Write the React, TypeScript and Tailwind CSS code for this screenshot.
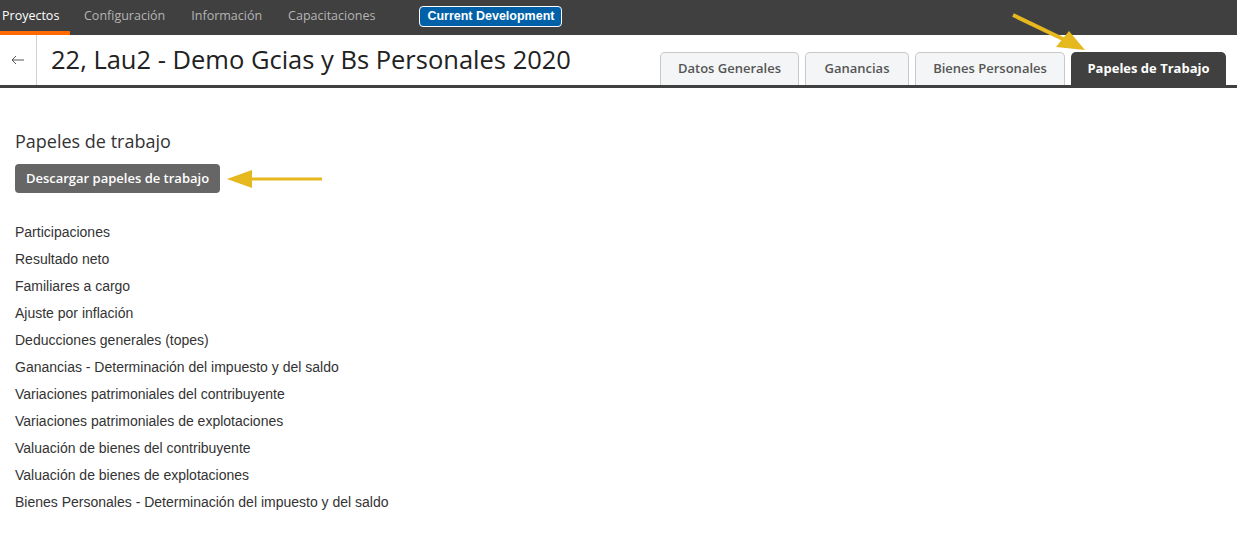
import React from 'react';

const navItems = ['Configuración', 'Información', 'Capacitaciones'];

const tabs = [
    { label: 'Datos Generales', width: 'w-[139px]' },
    { label: 'Ganancias', width: 'w-[104px]' },
    { label: 'Bienes Personales', width: 'w-[150px]' },
];

const papeles = [
    'Participaciones',
    'Resultado neto',
    'Familiares a cargo',
    'Ajuste por inflación',
    'Deducciones generales (topes)',
    'Ganancias - Determinación del impuesto y del saldo',
    'Variaciones patrimoniales del contribuyente',
    'Variaciones patrimoniales de explotaciones',
    'Valuación de bienes del contribuyente',
    'Valuación de bienes de explotaciones',
    'Bienes Personales - Determinación del impuesto y del saldo',
];

const App: React.FC = () => {
    return (
        <div className="relative w-[1237px] h-[560px] bg-white overflow-hidden font-['Open_Sans',sans-serif]">
            {/* Top nav */}
            <div className="h-[35px] bg-[#404040] flex items-stretch text-[12.5px] pb-[2px]">
                <div className="relative w-[70px] pl-[2px] flex items-center text-white">
                    Proyectos
                    <span className="absolute left-0 bottom-[-2px] w-[70px] h-[4px] bg-[#ff6a00]"></span>
                </div>
                <div className="flex items-center gap-[26px] ml-[14px] text-[#b4b4b4]">
                    {navItems.map(item => (
                        <span key={item}>{item}</span>
                    ))}
                </div>
                <div className="flex items-center ml-[44px]">
                    <span className="h-[21px] px-[7px] flex items-center rounded-[4px] border border-white bg-[#0061a8] text-white font-bold text-[12.5px] font-['Liberation_Sans',sans-serif]">
                        Current Development
                    </span>
                </div>
            </div>

            {/* Header */}
            <div className="h-[53px] flex items-stretch border-b-[3px] border-[#404040]">
                <div className="w-[37px] border-r border-[#d0d0d0] flex items-center justify-center">
                    <svg width="14" height="10" viewBox="0 0 14 10" fill="none" stroke="#555" strokeWidth="1">
                        <path d="M13 5H1M5 1L1 5l4 4" />
                    </svg>
                </div>
                <h1 className="ml-[14px] flex items-center text-[25.5px] text-[#222] leading-none pb-[1px]">
                    22, Lau2 - Demo Gcias y Bs Personales 2020
                </h1>
                <div className="ml-auto mr-[11px] flex items-end gap-[6px]">
                    {tabs.map(t => (
                        <div
                            key={t.label}
                            className={`${t.width} h-[33px] flex items-center justify-center rounded-t-[5px] border border-b-0 border-[#c8c8c8] bg-[#f4f5f7] text-[13px] font-semibold text-[#555]`}
                        >
                            {t.label}
                        </div>
                    ))}
                    <div className="w-[155px] h-[33px] flex items-center justify-center rounded-t-[5px] bg-[#404040] text-[13px] font-bold text-white">
                        Papeles de Trabajo
                    </div>
                </div>
            </div>

            {/* Content */}
            <div className="px-[15px] pt-[41px]">
                <h2 className="text-[18px] text-[#333] leading-[24px]">Papeles de trabajo</h2>
                <div className="mt-[11px] flex items-center">
                    <button className="h-[29px] w-[205px] rounded-[4px] bg-[#666666] text-white text-[13px] font-semibold">
                        Descargar papeles de trabajo
                    </button>
                    <svg className="ml-[7px]" width="96" height="20" viewBox="0 0 96 20">
                        <path d="M20 8.5H95v3H20z" fill="#e5b81e" />
                        <path d="M0 10L25 1v18z" fill="#e5b81e" />
                    </svg>
                </div>
                <ul className="mt-[26px] font-['Liberation_Sans',sans-serif] text-[14px] leading-[27px] text-[#333]">
                    {papeles.map(p => (
                        <li key={p}>{p}</li>
                    ))}
                </ul>
            </div>

            {/* annotation arrow over tabs */}
            <svg className="absolute left-0 top-0 pointer-events-none" width="1237" height="90">
                <path d="M1013 15L1065 40" stroke="#e5b81e" strokeWidth="4" />
                <path d="M1085 50L1056 47L1069 31z" fill="#e5b81e" />
            </svg>
        </div>
    );
};

export default App;
